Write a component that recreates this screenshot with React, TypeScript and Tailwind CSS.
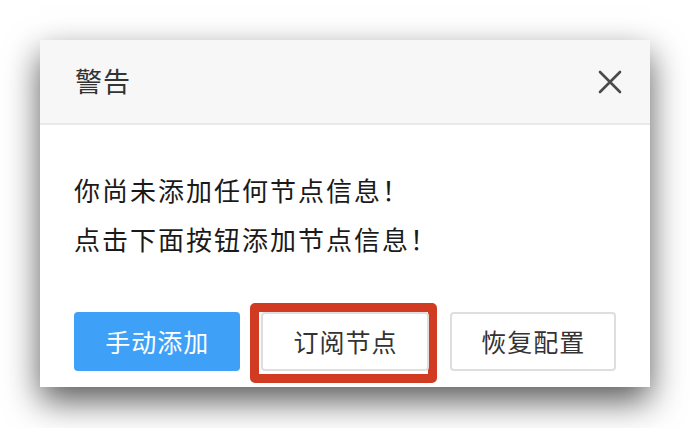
export default function App() {
  const font = { fontFamily: '"Noto Sans CJK SC", "Noto Sans", sans-serif' };
  return (
    <div className="w-[690px] h-[428px] bg-white relative" style={font}>
      <div className="absolute left-[40px] top-[40px] w-[610px] h-[347px] bg-white shadow-[0_14px_32px_rgba(0,0,0,0.65)] flex flex-col">
        <div className="h-[85px] bg-[#f7f7f7] border-b-2 border-[#e9e9e9] flex items-center justify-between pl-[35px] pr-[28px]">
          <span className="text-[27px] text-[#333] tracking-[1px]">警告</span>
          <svg width="24" height="24" viewBox="0 0 24 24">
            <path d="M2 2 L22 22 M22 2 L2 22" stroke="#4a4a4a" strokeWidth="2.6" strokeLinecap="round" />
          </svg>
        </div>
        <div className="flex-1 flex flex-col justify-between pt-[40px] pb-[16px] px-[34px]">
          <div className="text-[26px] leading-[49px] text-[#1a1a1a] tracking-[2px]">
            <p>你尚未添加任何节点信息！</p>
            <p>点击下面按钮添加节点信息！</p>
          </div>
          <div className="flex gap-[21px]">
            <button className="w-[168px] h-[59px] rounded-[4px] bg-[#3ea1f7] text-white text-[25px] tracking-[1px]">手动添加</button>
            <div className="relative">
              <div className="absolute left-[-11px] top-[-9px] right-[-8px] bottom-[-12px] border-[9px] border-[#d13b22] rounded-[5px]" />
              <button className="relative w-[168px] h-[59px] rounded-[4px] bg-white border-2 border-[#dedede] text-[#333] text-[25px] tracking-[1px]">订阅节点</button>
            </div>
            <button className="w-[167px] h-[59px] rounded-[4px] bg-white border-2 border-[#dedede] text-[#333] text-[25px] tracking-[1px]">恢复配置</button>
          </div>
        </div>
      </div>
    </div>
  );
}
